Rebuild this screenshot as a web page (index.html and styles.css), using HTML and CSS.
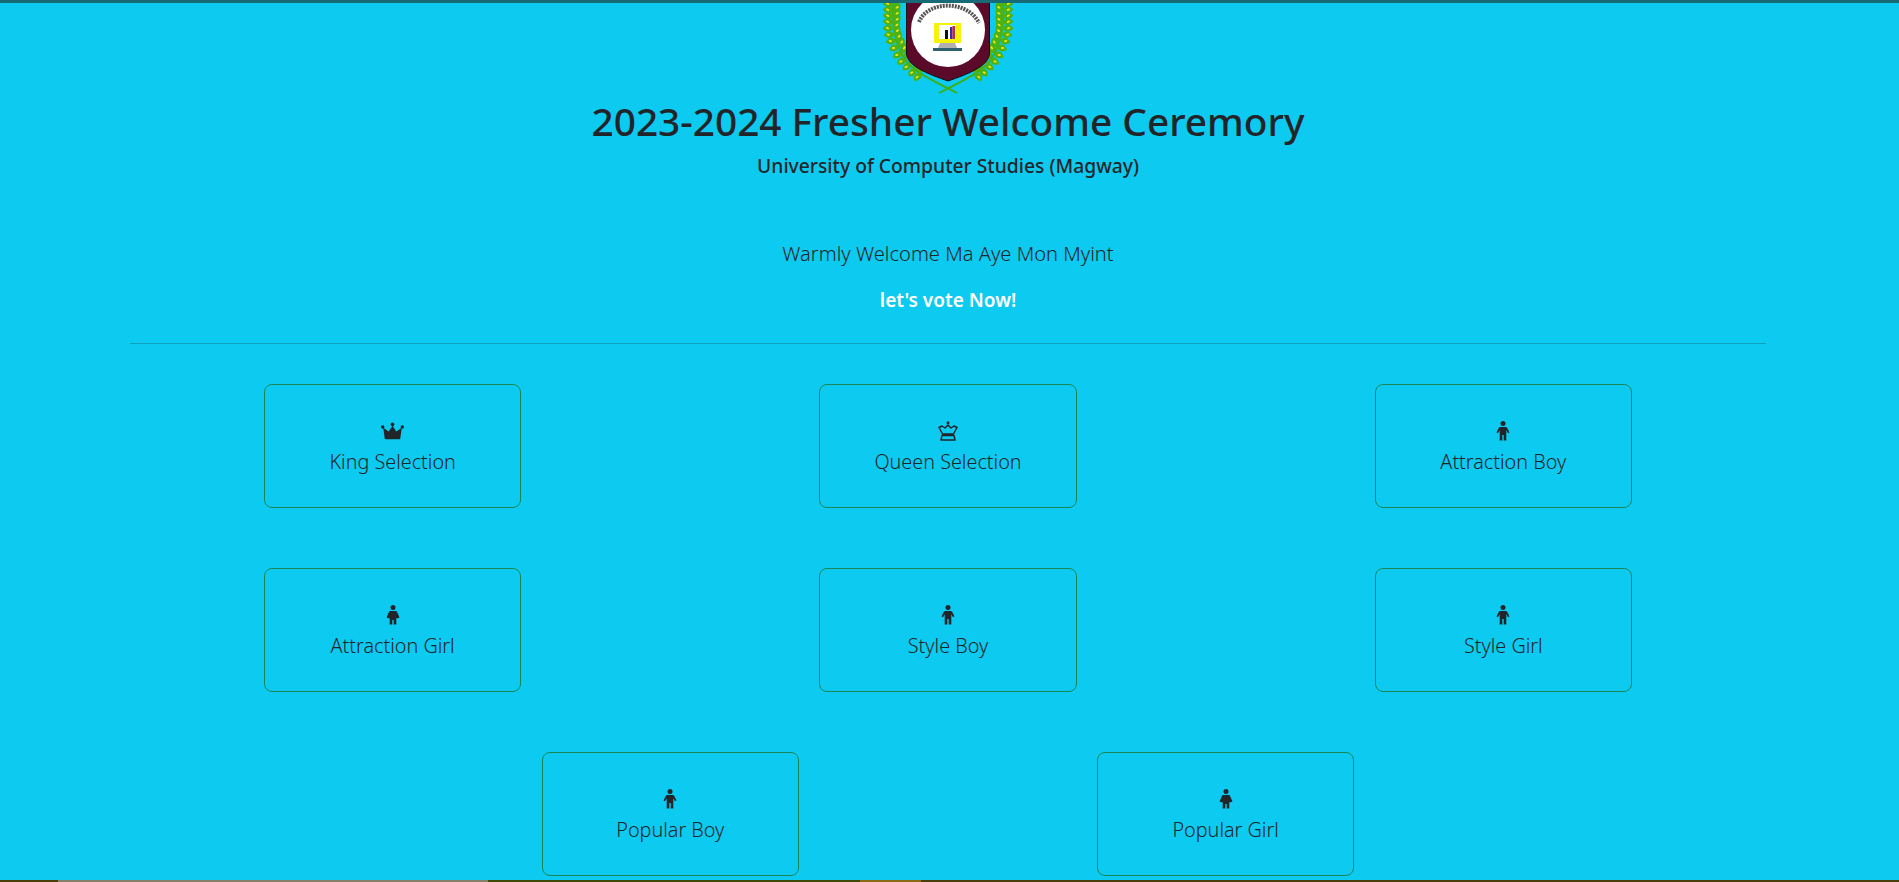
FILE: index.html
```html
<!DOCTYPE html>
<html lang="en">
<head>
<meta charset="utf-8">
<title>2023-2024 Fresher Welcome Ceremory</title>
<link rel="stylesheet" href="styles.css">
</head>
<body>
<div class="top-strip"></div>
<main class="page">
  <header class="head">
    <svg class="logo" viewBox="0 0 140 94" width="140" height="94" aria-hidden="true">
      <defs>
        <g id="leaf"><path d="M0 0C1-4.500 5-5.500 10-3C8.500 3 2.500 4 0 0Z" fill="#4fb20e"/><ellipse cx="5.500" cy="-1.100" rx="1.700" ry="1" fill="#f2e51c"/></g>
        <g id="branch">
          <path d="M14 0C13 18 15 38 24 53C31 66 46 74 78 90" fill="none" stroke="#3cb01c" stroke-width="1.800"/>
          <use href="#leaf" transform="translate(14 2) rotate(-30)"/><use href="#leaf" transform="translate(14 2) rotate(205)"/>
          <use href="#leaf" transform="translate(14 8) rotate(-30)"/><use href="#leaf" transform="translate(14 8) rotate(205)"/>
          <use href="#leaf" transform="translate(14 14) rotate(-30)"/><use href="#leaf" transform="translate(14 14) rotate(205)"/>
          <use href="#leaf" transform="translate(14 20) rotate(-30)"/><use href="#leaf" transform="translate(14 20) rotate(205)"/>
          <use href="#leaf" transform="translate(14 26) rotate(-35)"/><use href="#leaf" transform="translate(14 26) rotate(200)"/>
          <use href="#leaf" transform="translate(15 32) rotate(-40)"/><use href="#leaf" transform="translate(15 32) rotate(195)"/>
          <use href="#leaf" transform="translate(17 38) rotate(-45)"/><use href="#leaf" transform="translate(17 38) rotate(190)"/>
          <use href="#leaf" transform="translate(20 44) rotate(-50)"/><use href="#leaf" transform="translate(20 44) rotate(180)"/>
          <use href="#leaf" transform="translate(23 50) rotate(-55)"/><use href="#leaf" transform="translate(23 50) rotate(170)"/>
          <use href="#leaf" transform="translate(27 56) rotate(-60)"/><use href="#leaf" transform="translate(27 56) rotate(165)"/>
          <use href="#leaf" transform="translate(32 61) rotate(-65)"/><use href="#leaf" transform="translate(32 61) rotate(160)"/>
          <use href="#leaf" transform="translate(37 66) rotate(-75)"/><use href="#leaf" transform="translate(37 66) rotate(150)"/>
          <use href="#leaf" transform="translate(42 70) rotate(-85)"/><use href="#leaf" transform="translate(42 70) rotate(145)"/>
        </g>
      </defs>
      <use href="#branch"/>
      <use href="#branch" transform="translate(138 0) scale(-1 1)"/>
      <path d="M27.500 -1H110.500V50C110.500 63 89 71 69 78C49 71 27.500 63 27.500 50Z" fill="#5c0a2a" stroke="#111" stroke-width="1"/>
      <circle cx="69" cy="27" r="37" fill="#fff"/>
      <path d="M40 19C48 -2 88 -4 100 20" fill="none" stroke="#555" stroke-width="4" stroke-dasharray="2 1"/>
      <rect x="55" y="20" width="27" height="20" fill="#f6f20a"/>
      <rect x="60" y="22" width="17" height="14" fill="#fff"/>
      <rect x="66" y="27" width="3" height="9" fill="#111"/><rect x="71" y="24" width="2.500" height="12" fill="#3a2aa8"/><rect x="73.500" y="23" width="2.500" height="13" fill="#d42036"/>
      <path d="M61 40H76L78 45H59Z" fill="#b0b0b0"/>
      <rect x="54" y="45" width="29" height="3" fill="#2f6270"/>
    </svg>
    <h1 class="title">2023-2024 Fresher Welcome Ceremory</h1>
    <p class="subtitle">University of Computer Studies (Magway)</p>
    <p class="welcome">Warmly Welcome Ma Aye Mon Myint</p>
    <p class="vote">let's vote Now!</p>
  </header>
  <hr class="rule">
  <section class="grid">
    <div class="cell"><a class="card"><svg class="icon crown" viewBox="0 0 24 18"><path d="M12 0a2 2 0 1 1 0 4a2 2 0 1 1 0-4ZM1.800 3a1.800 1.800 0 1 1 0 3.600a1.800 1.800 0 1 1 0-3.600ZM22.200 3a1.800 1.800 0 1 1 0 3.600a1.800 1.800 0 1 1 0-3.600ZM12 3.500L16 9.500L21.700 5.700L20 17.500H4L2.300 5.700L8 9.500Z" fill="#212529"/></svg><span>King Selection</span></a></div>
    <div class="cell"><a class="card"><svg class="icon queen" viewBox="0 0 20 20"><circle cx="10" cy="1.800" r="1.500" fill="#212529"/><path d="M1 6.500L4 5L7 7L10 4L13 7L16 5L19 6.500L15.500 13H4.500ZM4 14.500H16L17 19H3Z" fill="none" stroke="#212529" stroke-width="1.500" stroke-linejoin="round"/></svg><span>Queen Selection</span></a></div>
    <div class="cell"><a class="card"><svg class="icon child" viewBox="0 0 14 20"><use href="#boy"/></svg><span>Attraction Boy</span></a></div>
    <div class="cell"><a class="card"><svg class="icon child" viewBox="0 0 14 20"><use href="#girl"/></svg><span>Attraction Girl</span></a></div>
    <div class="cell"><a class="card"><svg class="icon child" viewBox="0 0 14 20"><use href="#boy"/></svg><span>Style Boy</span></a></div>
    <div class="cell"><a class="card"><svg class="icon child" viewBox="0 0 14 20"><use href="#boy"/></svg><span>Style Girl</span></a></div>
    <div class="cell"><a class="card"><svg class="icon child" viewBox="0 0 14 20"><use href="#boy"/></svg><span>Popular Boy</span></a></div>
    <div class="cell"><a class="card"><svg class="icon child" viewBox="0 0 14 20"><use href="#girl"/></svg><span>Popular Girl</span></a></div>
  </section>
</main>
<div class="bottom-strip"><i class="s1"></i><i class="s2"></i><i class="s3"></i><i class="s4"></i><i class="s5"></i></div>
<svg class="defs" width="0" height="0" aria-hidden="true">
  <defs>
    <g id="boy" fill="#212529"><circle cx="7" cy="2.500" r="2.500"/><path d="M4.500 6H9.500C10.500 6 11 6.500 11.500 7.500L13.500 11.500L12 12.300L10.300 9.300V13.500V19.500H7.700V14H6.300V19.500H3.700V9.300L2 12.300L.5 11.500L2.500 7.500C3 6.500 3.500 6 4.500 6Z"/></g>
    <g id="girl" fill="#212529"><circle cx="7" cy="2.500" r="2.500"/><path d="M4.500 6H9.500C10.500 6 11 6.500 11.500 8L13.500 12.500L11.500 13.300H10.300V19.500H7.700V15H6.300V19.500H3.700V13.300H2.500L.5 12.500L2.500 8C3 6.500 3.500 6 4.500 6Z"/></g>
  </defs>
</svg>
</body>
</html>
```
FILE: styles.css
```css
* { box-sizing: border-box; }
html, body { margin: 0; height: 100%; overflow: hidden; }
body {
  display: flex;
  flex-direction: column;
  height: 882px;
  background: #0dcaf0;
  color: #212529;
  font-family: "Noto Sans", "Open Sans", sans-serif;
}
.top-strip { flex: 0 0 3px; background: #176a78; }
.page { flex: 1 1 auto; min-height: 0; width: 1636px; margin-left: 130px; }
.head { display: flex; flex-direction: column; align-items: center; }
.logo { display: block; margin-left: 2px; }
.title { margin: 0; font-size: 38.800px; font-weight: 500; line-height: 48px; }
.subtitle { margin: 7px 0 0; font-size: 19.300px; font-weight: 500; line-height: 27px; }
.welcome { margin: 61px 0 0; font-size: 20.100px; font-weight: 300; line-height: 28px; }
.vote { margin: 18px 0 0; font-size: 19px; font-weight: 600; line-height: 28px; color: #fff; }
.rule { margin: 29px 0 40px; border: 0; border-top: 1px solid rgba(33, 37, 41, .25); }
.grid { display: flex; flex-wrap: wrap; justify-content: center; margin: 0 -15px; row-gap: 60px; }
.cell { flex: 0 0 33.3333%; display: flex; justify-content: center; }
.card {
  width: 257.500px;
  height: 124px;
  padding-top: 4px;
  display: flex;
  flex-direction: column;
  align-items: center;
  justify-content: center;
  border: 1px solid #198754;
  border-radius: 8px;
  font-size: 19.800px;
  font-weight: 300;
  line-height: 28px;
}
.icon { display: block; height: 20px; margin-bottom: 7px; }
.crown { width: 23px; }
.queen { width: 20px; }
.child { width: 14px; }
.bottom-strip { flex: 0 0 2px; display: flex; background: #3e4a0c; }
.bottom-strip i { display: block; height: 2px; }
.s1 { width: 58px; background: #4a3f08; }
.s2 { width: 430px; background: #84806a; }
.s3 { width: 372px; background: #3f4a08; }
.s4 { width: 61px; background: #8a6a14; }
.s5 { flex: 1; background: #4a3f0c; }
.defs { position: absolute; }
```
